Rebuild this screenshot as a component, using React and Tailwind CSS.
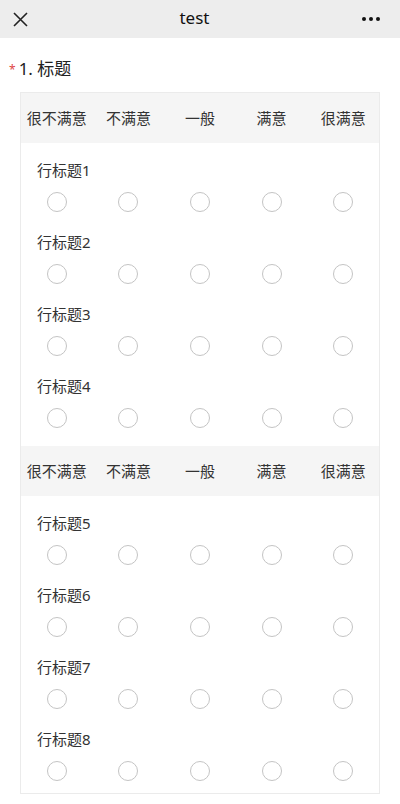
import React from "react";

const cols = ["很不满意", "不满意", "一般", "满意", "很满意"];

function HeaderRow() {
  return (
    <div className="grid grid-cols-5 h-[50px] items-center bg-[#f5f5f5]">
      {cols.map((c) => (
        <div key={c} className="text-center text-[15px] leading-5 text-[#333]">
          {c}
        </div>
      ))}
    </div>
  );
}

function Row({ label }) {
  return (
    <div className="flex flex-col">
      <div className="pl-[16px] text-[15px] leading-5 text-[#333]">{label}</div>
      <div className="mt-3 grid grid-cols-5">
        {cols.map((c) => (
          <div key={c} className="flex justify-center">
            <div className="w-5 h-5 rounded-full border border-[#c4c4c4] bg-white" />
          </div>
        ))}
      </div>
    </div>
  );
}

function Block({ labels, last }) {
  return (
    <div>
      <HeaderRow />
      <div className={"flex flex-col gap-5 pt-[17px] " + (last ? "pb-[12px]" : "pb-[18px]")}>
        {labels.map((l) => (
          <Row key={l} label={l} />
        ))}
      </div>
    </div>
  );
}

export default function App() {
  return (
    <div
      className="w-[400px] min-h-[804px] bg-white text-[#333]"
      style={{ fontFamily: '"Noto Sans", "Noto Sans CJK SC", sans-serif' }}
    >
      <div className="h-[38px] bg-[#ededed] flex items-center justify-between px-[13px]">
        <svg width="15" height="15" viewBox="0 0 15 15" className="text-[#222]">
          <path d="M1 1 L14 14 M14 1 L1 14" stroke="currentColor" strokeWidth="1.6" fill="none" />
        </svg>
        <div className="text-[17px] leading-5 text-[#111] -mt-[2px]">test</div>
        <svg width="20" height="6" viewBox="0 0 20 6" className="text-[#111] mr-[6px]">
          <circle cx="3" cy="3" r="2" fill="currentColor" />
          <circle cx="10" cy="3" r="2" fill="currentColor" />
          <circle cx="17" cy="3" r="2" fill="currentColor" />
        </svg>
      </div>
      <div className="pt-[16px] pl-[9px] flex items-center h-[30px] box-content">
        <span className="text-[#e04545] text-[12px] leading-none mr-[3px] mt-[1px]">*</span>
        <span className="text-[17px] leading-[22px] text-[#222]">1. 标题</span>
      </div>
      <div className="mx-[20px] mt-[8px] border border-[#ebebeb]">
        <Block labels={["行标题1", "行标题2", "行标题3", "行标题4"]} />
        <Block labels={["行标题5", "行标题6", "行标题7", "行标题8"]} last />
      </div>
    </div>
  );
}
